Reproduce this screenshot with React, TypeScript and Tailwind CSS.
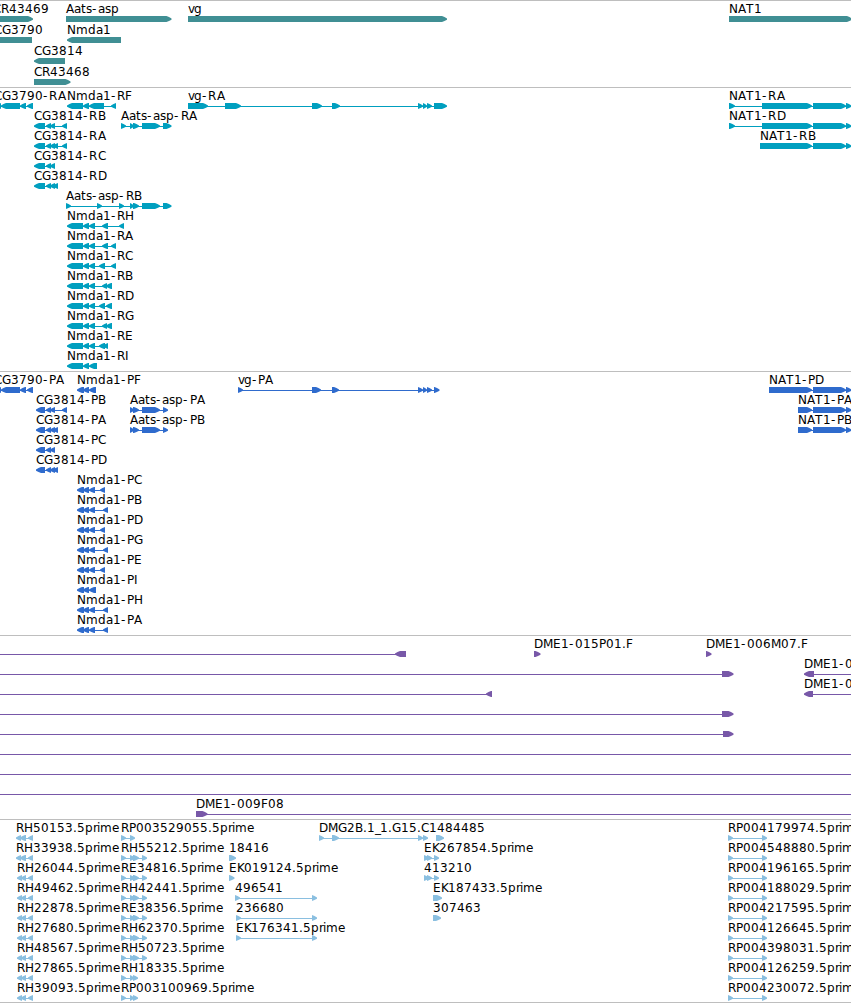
import React from 'react';

type Feature = {
  label?: string;
  x?: number;
  dir?: 'l' | 'r';
  boxes?: number[][];
  line?: [number, number];
};

type TrackData = { color: string; rows: Feature[][] };

// Pixel advances for the 12px label face
const ADVANCE: Record<string, number> = {
  A: 8, B: 8, C: 8, D: 9, E: 8, F: 7, G: 9, H: 9, I: 4, K: 7, M: 10, N: 9, P: 7, R: 8.4, T: 8,
  a: 7, d: 8, e: 7, g: 8, i: 3, m: 11.5, p: 8, r: 4.3, s: 6, t: 5, v: 6, '.': 3.7, '-': 6.4, _: 5.5,
};

const glyphPositions = (label: string, start: number) => {
  let x = start;
  return label.split('').map((ch) => {
    const at = Math.round(x);
    x += ADVANCE[ch] ?? 8;
    return at;
  }).join(' ');
};

const arrowPoints = (a: number, b: number, dir: 'l' | 'r') => {
  const head = Math.min(5, b - a);
  return dir === 'r'
    ? `${a},15 ${b - head},15 ${b - head / 2},16 ${b},17.5 ${b},18.8 ${b - head / 2},20 ${b - head},21 ${a},21`
    : `${b},15 ${a + head},15 ${a + head / 2},16 ${a},17.5 ${a},18.8 ${a + head / 2},20 ${a + head},21 ${b},21`;
};

const r = (label: string, x: number, boxes: number[][]): Feature => ({ label, x, dir: 'r', boxes });
const l = (label: string, x: number, boxes: number[][]): Feature => ({ label, x, dir: 'l', boxes });

// Shared exon structures
const cg3790 = [[-4, 1], [1, 20], [20, 26], [27, 33]];
const nmda = [[67, 83], [83, 89], [89, 95]];
const nmdaCds = [[77, 84], [83, 89], [89, 95]];
const aats = [[130, 134], [133, 139], [142, 160]];
const nat1 = [[813, 846], [846, 851.5]];
const cg3814 = [[46, 51], [50, 55]];

const genes: TrackData = {
  color: '#408f94',
  rows: [
    [r('CR43469', -7, [[-8, 33]]), r('Aats-asp', 66, [[66, 171.5]]), r('vg', 188, [[188, 447]]), r('NAT1', 729, [[729, 852]])],
    [l('CG3790', -6, [[-20, 32]]), l('Nmda1', 67, [[67, 121]])],
    [l('CG3814', 34, [[34, 65]])],
    [r('CR43468', 34, [[34, 70.5]])],
  ],
};

const transcripts: TrackData = {
  color: '#009fbf',
  rows: [
    [
      l('CG3790-RA', -6, cg3790),
      l('Nmda1-RF', 67, [[67, 83], [83, 89], [89, 104], [111, 116]]),
      r('vg-RA', 188, [[188, 208], [225, 241], [312, 322], [332, 340], [418, 423], [423, 427], [427, 432], [434, 447]]),
      r('NAT1-RA', 729, [[729, 735], [762, 812], ...nat1]),
    ],
    [
      l('CG3814-RB', 34, [[34, 45], ...cg3814, [62, 67]]),
      r('Aats-asp-RA', 121, [[121, 126], ...aats, [163, 171.5]]),
      r('NAT1-RD', 729, [[729, 735], [762, 812], ...nat1]),
    ],
    [l('CG3814-RA', 34, [[34, 45], ...cg3814, [53, 58], [62, 67]]), r('NAT1-RB', 760, [[760, 812], ...nat1])],
    [l('CG3814-RC', 34, [[34, 45], ...cg3814])],
    [l('CG3814-RD', 34, [[34, 45], ...cg3814, [53, 58]])],
    [r('Aats-asp-RB', 66, [[66, 71], [97, 102], [119, 124], ...aats, [163, 171.5]])],
    [l('Nmda1-RH', 67, [...nmda, [102, 108], [119, 124]])],
    [l('Nmda1-RA', 67, [...nmda, [102, 108], [111, 116]])],
    [l('Nmda1-RC', 67, [...nmda, [99, 105], [111, 116]])],
    [l('Nmda1-RB', 67, [...nmda, [102, 107], [106, 112]])],
    [l('Nmda1-RD', 67, [...nmda, [99, 105], [106, 112]])],
    [l('Nmda1-RG', 67, [...nmda, [102, 107], [106, 112]])],
    [l('Nmda1-RE', 67, [...nmda, [99, 105], [103, 108]])],
    [l('Nmda1-RI', 67, [[67, 83], [83, 89], [89, 97]])],
  ],
};

const cds: TrackData = {
  color: '#2f6bcd',
  rows: [
    [
      l('CG3790-PA', -6, cg3790),
      l('Nmda1-PF', 77, [[77, 84], [83, 89], [89, 96]]),
      r('vg-PA', 238, [[238, 243], [312, 321], [332, 339], [418, 423], [423, 427], [427, 432], [434, 439.5]]),
      r('NAT1-PD', 769, [[769, 812], ...nat1]),
    ],
    [
      l('CG3814-PB', 36, [[36, 45], ...cg3814, [62, 67]]),
      r('Aats-asp-PA', 130, [...aats, [163, 168]]),
      r('NAT1-PA', 798, [[798, 812], ...nat1]),
    ],
    [
      l('CG3814-PA', 36, [[36, 45], ...cg3814, [53, 58]]),
      r('Aats-asp-PB', 130, [...aats, [163, 168]]),
      r('NAT1-PB', 798, [[798, 812], ...nat1]),
    ],
    [l('CG3814-PC', 36, [[36, 45], ...cg3814])],
    [l('CG3814-PD', 36, [[36, 45], ...cg3814, [53, 58]])],
    [l('Nmda1-PC', 77, [...nmdaCds, [100, 105]])],
    [l('Nmda1-PB', 77, [...nmdaCds, [103, 108]])],
    [l('Nmda1-PD', 77, [...nmdaCds, [100, 105]])],
    [l('Nmda1-PG', 77, [...nmdaCds, [103, 108]])],
    [l('Nmda1-PE', 77, [...nmdaCds, [100, 105]])],
    [l('Nmda1-PI', 77, [[77, 84], [83, 89], [89, 96]])],
    [l('Nmda1-PH', 77, [...nmdaCds, [103, 108]])],
    [l('Nmda1-PA', 77, [...nmdaCds, [103, 108]])],
  ],
};

const clones: TrackData = {
  color: '#7858a8',
  rows: [
    [
      { dir: 'l', boxes: [[395, 406]], line: [0, 400] },
      r('DME1-015P01.F', 534, [[534, 540.5]]),
      r('DME1-006M07.F', 706, [[706, 711.5]]),
    ],
    [{ dir: 'r', boxes: [[722, 733.5]], line: [0, 725] }, { ...l('DME1-0', 804, [[804, 814]]), line: [810, 851] }],
    [{ dir: 'l', boxes: [[486, 492]], line: [0, 490] }, { ...l('DME1-0', 804, [[804, 813]]), line: [810, 851] }],
    [{ dir: 'r', boxes: [[722, 733.5]], line: [0, 725] }],
    [{ dir: 'r', boxes: [[723, 733.5]], line: [0, 725] }],
    [{ line: [0, 851] }],
    [{ line: [0, 851] }],
    [{ line: [0, 851] }],
    [{ ...r('DME1-009F08', 196, [[196, 207.5]]), line: [200, 851] }],
  ],
};

const rh = (name: string, x = 17) => l(`${name}.5prime`, x, [[x, x + 5], [x + 4, 26], [28, 33]]);
const rpLong = (name: string) => r(`${name}.5prime`, 121, [[121, 126], [130, 135], [133, 139], [142, 147]]);
const rpShort = (name: string) => r(`${name}.5prime`, 121, [[121, 126], [130, 134], [133, 138]]);
const nat = (name: string) => r(`${name}.5prime`, 728, [[728, 733], [762, 767]]);

const ests: TrackData = {
  color: '#8abfe0',
  rows: [
    [
      rh('RH50153', 16),
      r('RP003529055.5prime', 121, [[121, 126], [130, 135]]),
      r('DMG2B.1_1.G15.C1484485', 319, [[319, 324], [332, 339], [418, 423], [423, 428]]),
      { dir: 'r', boxes: [[436, 444]] },
      nat('RP004179974'),
    ],
    [rh('RH33938', 16), rpLong('RH55212'), r('18416', 229, [[229, 236]]), r('EK267854.5prime', 424, [[424, 429], [427, 432], [434, 439]]), nat('RP004548880')],
    [rh('RH26044'), rpLong('RE34816'), r('EK019124.5prime', 229, [[229, 234.5]]), r('413210', 424, [[424, 429], [427, 432], [434, 439]]), nat('RP004196165')],
    [rh('RH49462'), rpLong('RH42441'), r('496541', 235, [[235, 240], [312, 317]]), r('EK187433.5prime', 433, [[433, 442]]), nat('RP004188029')],
    [rh('RH22878'), rpLong('RE38356'), r('236680', 236, [[236, 241], [312, 317]]), r('307463', 433, [[433, 441]]), nat('RP004217595')],
    [rh('RH27680'), rpLong('RH62370'), r('EK176341.5prime', 236, [[236, 241], [312, 317]]), nat('RP004126645')],
    [rh('RH48567'), rpLong('RH50723'), nat('RP004398031')],
    [rh('RH27865'), rpShort('RH18335'), nat('RP004126259')],
    [rh('RH39093'), rpShort('RP003100969'), nat('RP004230072')],
  ],
};

const FeatureGlyph = ({ feature }: { feature: Feature }) => {
  const { label, x = 0, dir = 'r', boxes = [] } = feature;
  const [from, to] = feature.line ?? [boxes[0][0] + 1, boxes[boxes.length - 1][1] - 1];
  return (
    <g>
      <rect x={from} y={18} width={to - from} height={1} />
      {boxes.map(([a, b], i) => (
        <polygon key={i} points={arrowPoints(a, b, dir)} />
      ))}
      {label && (
        <text x={glyphPositions(label, x)} y={12} className="fill-black">
          {label}
        </text>
      )}
    </g>
  );
};

const Track = ({ track, rowClass, className }: { track: TrackData; rowClass: string; className: string }) => (
  <section className={`border-t border-[#bebebe] ${className}`}>
    {track.rows.map((row, i) => (
      <svg key={i} width="851" className={`block overflow-visible ${rowClass}`} fill={track.color}>
        {row.map((feature, j) => (
          <FeatureGlyph key={j} feature={feature} />
        ))}
      </svg>
    ))}
  </section>
);

const App: React.FC = () => {
  return (
    <div className="flex h-[1003px] w-[851px] flex-col overflow-hidden bg-white font-['DejaVu_Sans',sans-serif] text-[12px]">
      <Track track={genes} rowClass="h-[21px]" className="pb-[2px]" />
      <Track track={transcripts} rowClass="h-5" className="pb-[3px]" />
      <Track track={cds} rowClass="h-5" className="pb-[3px]" />
      <Track track={clones} rowClass="h-5" className="pb-[3px]" />
      <Track track={ests} rowClass="h-5" className="border-b pb-[2px]" />
    </div>
  );
};

export default App;
